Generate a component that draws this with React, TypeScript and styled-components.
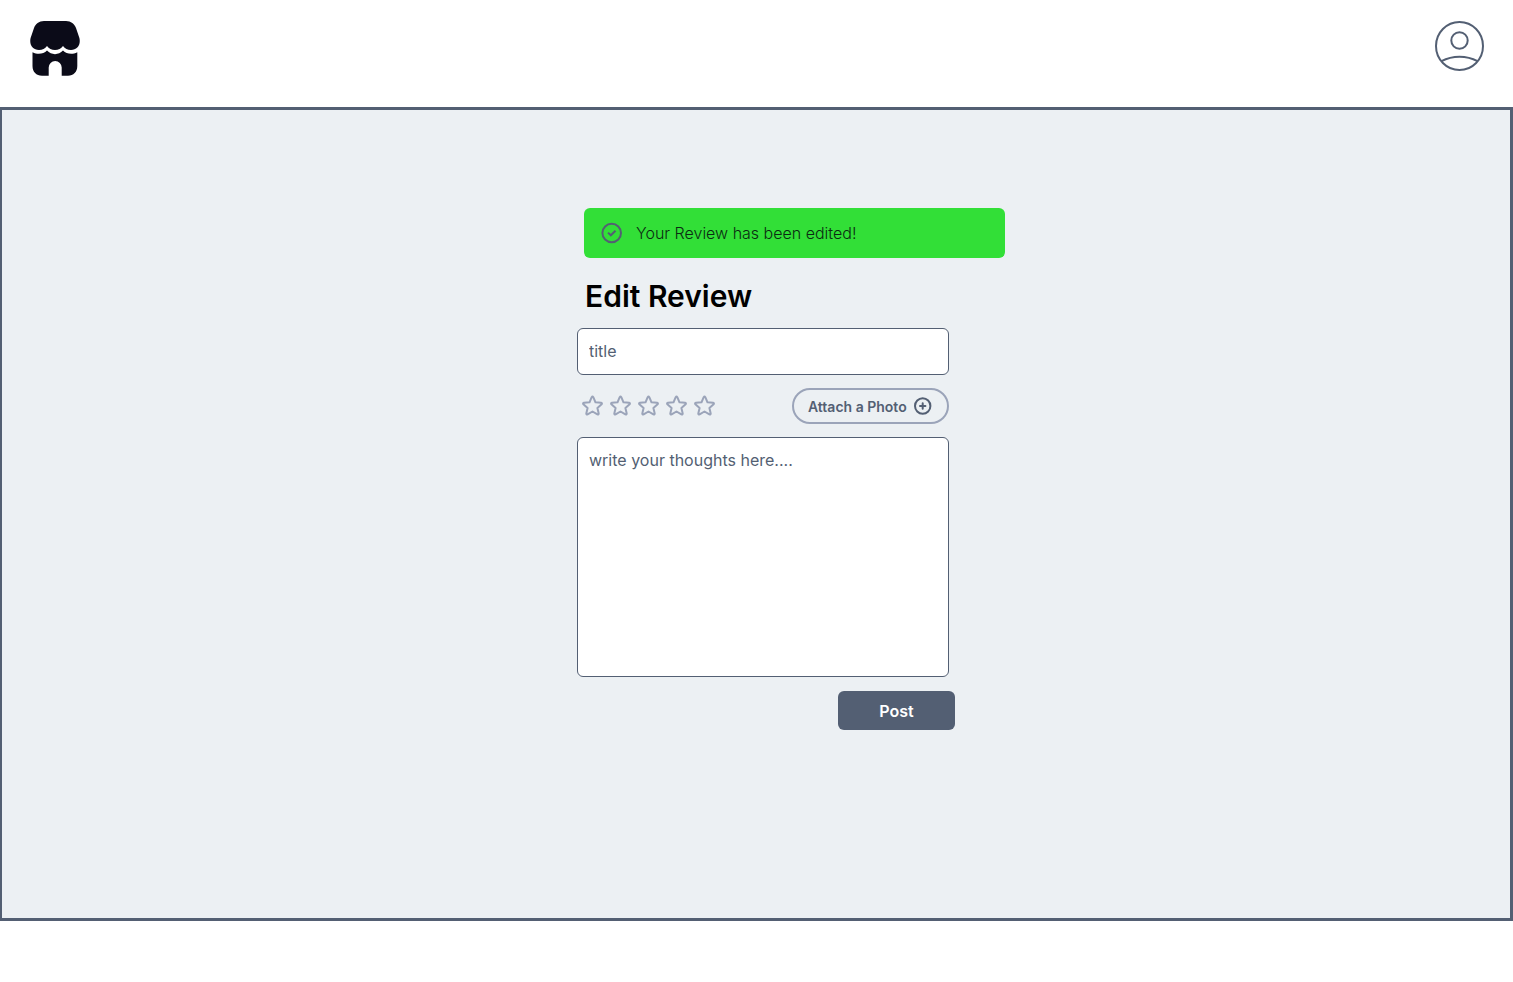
import React from "react";
import styled, { createGlobalStyle } from "styled-components";

const slate = "#535f73";
const mist = "#9ba4b9";

const GlobalStyle = createGlobalStyle`
  *, *::before, *::after { box-sizing: border-box; }
  body {
    margin: 0;
    background: #fff;
    color: #000;
    font-family: Inter, "Liberation Sans", sans-serif;
  }
  button, input, textarea { font-family: inherit; }
`;

const Page = styled.div`
  display: flex;
  flex-direction: column;
  min-height: 100vh;
  padding-bottom: 61px;
`;

const Header = styled.header`
  display: flex;
  justify-content: space-between;
  align-items: flex-start;
  height: 107px;
  padding: 21px 29px 0 30px;
`;

const IconLink = styled.a`
  display: flex;
  color: inherit;
`;

const IconButton = styled.button`
  display: flex;
  padding: 0;
  border: 0;
  background: none;
  color: ${slate};
  cursor: pointer;
`;

const Main = styled.main`
  flex: 1;
  display: flex;
  justify-content: center;
  align-items: flex-start;
  padding: 98px 0 48px 14px;
  border: 3px solid ${slate};
  border-left-width: 2px;
  background: #ecf0f3;
`;

const Form = styled.form`
  display: flex;
  flex-direction: column;
  width: 372px;
`;

const Banner = styled.div`
  display: flex;
  align-items: center;
  gap: 13px;
  width: 421px;
  height: 50px;
  margin-left: 7px;
  padding: 0 17px;
  border-radius: 6px;
  background: #32df37;
  color: #0b2b12;
  font-size: 16px;
  font-weight: 300;
  svg { color: ${slate}; }
`;

const Title = styled.h1`
  margin: 19px 0 13px 8px;
  font-size: 30px;
  line-height: 38px;
  font-weight: 600;
`;

const TextField = styled.input`
  width: 100%;
  height: 47px;
  padding: 0 11px 2px;
  border: 1px solid ${slate};
  border-radius: 6px;
  background: #fff;
  color: ${slate};
  font-size: 16px;
  &::placeholder { color: ${slate}; opacity: 1; }
`;

const TextArea = styled.textarea`
  display: block;
  width: 100%;
  height: 240px;
  padding: 10px 11px;
  border: 1px solid ${slate};
  border-radius: 6px;
  background: #fff;
  color: ${slate};
  font-size: 16px;
  line-height: 24px;
  resize: none;
  &::placeholder { color: ${slate}; opacity: 1; }
`;

const Tools = styled.div`
  display: flex;
  justify-content: space-between;
  align-items: center;
  margin: 13px 0;
`;

const Stars = styled.fieldset`
  display: flex;
  gap: 4px;
  margin: 0;
  padding: 0 0 0 4px;
  border: 0;
`;

const StarLabel = styled.label`
  display: flex;
  color: ${mist};
  cursor: pointer;
`;

const StarInput = styled.input`
  appearance: none;
  width: 0;
  height: 0;
  margin: 0;
`;

const AttachButton = styled.button`
  display: flex;
  justify-content: space-between;
  align-items: center;
  width: 157px;
  height: 36px;
  padding: 0 15px 0 14px;
  border: 2px solid ${mist};
  border-radius: 18px;
  background: transparent;
  color: ${slate};
  font-size: 14px;
  font-weight: 600;
  white-space: nowrap;
  cursor: pointer;
`;

const PostButton = styled.button`
  align-self: flex-end;
  width: 117px;
  height: 39px;
  margin: 14px -6px 0 0;
  border: 0;
  border-radius: 6px;
  background: ${slate};
  color: #fff;
  font-size: 16px;
  font-weight: 600;
  cursor: pointer;
`;

const StoreIcon = () => (
  <svg width="50" height="55" viewBox="0 0 50 55" fill="#0b0b18" aria-hidden="true">
    <path d="M14 0H36C41 0 44.5 3 46 7L49.4 17C51 24 47 29 41 29C37.5 29 35 27.4 33 25C31 27.4 28.500 29 25 29C21.500 29 19 27.4 17 25C15 27.4 12.500 29 9 29C3 29-1 24 .6 17L4 7C5.500 3 9 0 14 0Z" />
    <path d="M2.500 31.300C8 34 13.500 33 17 29.600C21.500 34.300 28.500 34.300 33 29.600C36.500 33 42 34 47.300 31.300V45C47.300 51 43.500 54.700 38 54.700H31.700V46.500A6.500 6.500 0 0 0 18.700 46.500V54.700H12C6.300 54.700 2.500 51 2.500 45Z" />
  </svg>
);

const UserIcon = () => (
  <svg width="49" height="50" viewBox="0 0 49 50" fill="none" stroke="currentColor" strokeWidth="2" aria-hidden="true">
    <ellipse cx="24.500" cy="25" rx="23.500" ry="24" />
    <ellipse cx="24.500" cy="19.500" rx="8.200" ry="8.300" />
    <path d="M6.500 40.200C17.500 34.200 31.500 34.200 42.500 40.200" />
  </svg>
);

const CheckIcon = () => (
  <svg width="22" height="22" viewBox="0 0 22 22" fill="none" stroke="currentColor" strokeWidth="2" aria-hidden="true">
    <circle cx="10.700" cy="11" r="9.300" />
    <path d="M7 10.600L9.800 13.300L14.500 8.700" />
  </svg>
);

const PlusIcon = () => (
  <svg width="18" height="18" viewBox="0 0 18 18" fill="none" stroke="currentColor" strokeWidth="2" strokeLinecap="round" aria-hidden="true">
    <circle cx="8.700" cy="9" r="7.700" />
    <path d="M8.700 6.300V11.700M6 9H11.400" />
  </svg>
);

const StarIcon = () => (
  <svg width="24" height="24" viewBox="0 0 24 24" fill="none" stroke="currentColor" strokeWidth="2" strokeLinejoin="round" aria-hidden="true">
    <path d="M10.700 3.200Q11.500 2 12.300 3.200L14.500 8.300L20.100 8.800Q21.500 9.200 20.600 10.300L16.400 14.100L17.700 19.500Q17.700 20.900 16.400 20.400L11.500 17.500L6.600 20.400Q5.300 20.900 5.300 19.500L6.600 14.100L2.400 10.300Q1.500 9.200 2.900 8.800L8.500 8.300Z" />
  </svg>
);

export default function App() {
  return (
    <Page>
      <GlobalStyle />
      <Header>
        <IconLink href="#" aria-label="Home"><StoreIcon /></IconLink>
        <IconButton type="button" aria-label="Account"><UserIcon /></IconButton>
      </Header>
      <Main>
        <Form onSubmit={(e: React.FormEvent) => e.preventDefault()}>
          <Banner role="status">
            <CheckIcon />
            <span>Your Review has been edited!</span>
          </Banner>
          <Title>Edit Review</Title>
          <TextField type="text" placeholder="title" aria-label="title" />
          <Tools>
            <Stars aria-label="Rating">
              {[1, 2, 3, 4, 5].map((n) => (
                <StarLabel key={n}>
                  <StarInput type="radio" name="rating" value={n} aria-label={`${n} stars`} />
                  <StarIcon />
                </StarLabel>
              ))}
            </Stars>
            <AttachButton type="button">
              Attach a Photo
              <PlusIcon />
            </AttachButton>
          </Tools>
          <TextArea placeholder="write your thoughts here...." aria-label="Your thoughts" />
          <PostButton type="submit">Post</PostButton>
        </Form>
      </Main>
    </Page>
  );
}
